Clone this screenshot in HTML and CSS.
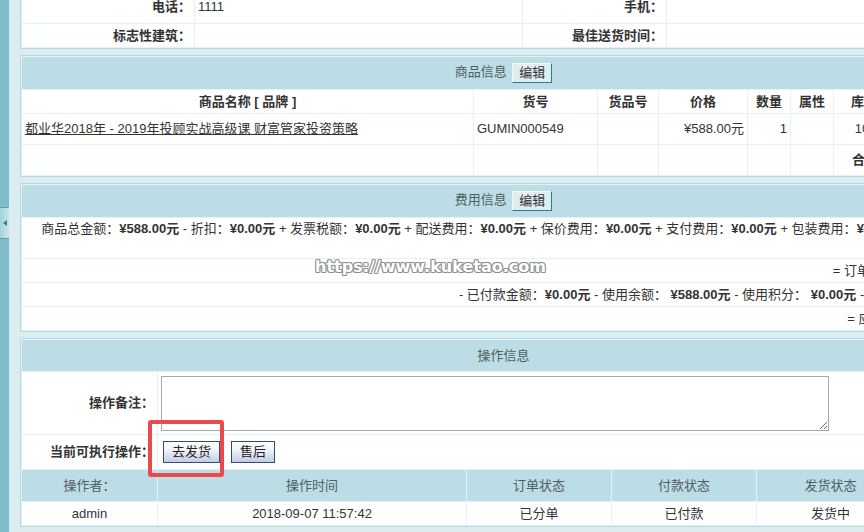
FILE: index.html
```html
<!DOCTYPE html>
<html lang="zh-CN">
<head>
<meta charset="utf-8">
<title>订单信息</title>
<link rel="stylesheet" href="styles.css">
</head>
<body>
<div class="page">
  <aside class="side"><div class="side-tab"><span class="side-arrow"></span></div></aside>
  <main class="main">
    <div class="box">
      <table>
        <colgroup><col class="w172"><col class="w327"><col class="w143"><col></colgroup>
        <tr class="h32"><td class="lbl">电话：</td><td>1111</td><td class="lbl">手机：</td><td></td></tr>
        <tr class="h23"><td class="lbl">标志性建筑：</td><td></td><td class="lbl">最佳送货时间：</td><td></td></tr>
      </table>
    </div>

    <div class="box">
      <table>
        <colgroup><col class="w451"><col class="w123"><col class="w60"><col class="w88"><col class="w42"><col class="w42"><col class="w60"><col></colgroup>
        <tr class="h32"><th colspan="8">商品信息 <button class="btn-edit" type="button">编辑</button></th></tr>
        <tr class="h23 hd"><td>商品名称 [ 品牌 ]</td><td>货号</td><td>货品号</td><td>价格</td><td>数量</td><td>属性</td><td>库存</td><td>小计</td></tr>
        <tr class="h30"><td><a class="goods-link" href="#">都业华2018年 - 2019年投顾实战高级课 财富管家投资策略</a></td><td>GUMIN000549</td><td></td><td class="r">¥588.00元</td><td class="r">1</td><td></td><td class="r">10000</td><td class="r">¥588.00元</td></tr>
        <tr class="h30"><td></td><td></td><td></td><td></td><td></td><td></td><td class="r"><strong>合计：</strong></td><td class="r">¥588.00元</td></tr>
      </table>
    </div>

    <div class="box">
      <table>
        <tr class="h32"><th>费用信息 <button class="btn-edit" type="button">编辑</button></th></tr>
        <tr class="h40"><td class="r">商品总金额：<strong>¥588.00元</strong> - 折扣：<strong>¥0.00元</strong> + 发票税额：<strong>¥0.00元</strong> + 配送费用：<strong>¥0.00元</strong> + 保价费用：<strong>¥0.00元</strong> + 支付费用：<strong>¥0.00元</strong> + 包装费用：<strong>¥0.00元</strong> + 贺卡费用：<strong>¥0.00元</strong></td></tr>
        <tr class="h23"><td class="r">= 订单总金额：<strong>¥588.00元</strong></td></tr>
        <tr class="h23"><td class="r">- 已付款金额：<strong>¥0.00元</strong> - 使用余额： <strong>¥588.00元</strong> - 使用积分： <strong>¥0.00元</strong> - 使用红包： <strong>¥0.00元</strong></td></tr>
        <tr class="h23"><td class="r">= 应付款金额：<strong>¥0.00元</strong></td></tr>
      </table>
    </div>

    <div class="box">
      <table>
        <colgroup><col class="w135"><col class="w308"><col class="w144"><col class="w144"><col class="w147"><col></colgroup>
        <tr class="h31"><th colspan="6">操作信息</th></tr>
        <tr class="h61"><td class="lbl">操作备注：</td><td colspan="5" class="note-cell"><textarea class="note" name="action_note"></textarea></td></tr>
        <tr class="h34"><td class="lbl">当前可执行操作：</td><td colspan="5"><div class="actions"><button class="btn-op" type="button">去发货</button><button class="btn-op" type="button">售后</button></div></td></tr>
        <tr class="h31"><th>操作者：</th><th>操作时间</th><th>订单状态</th><th>付款状态</th><th>发货状态</th><th>备注</th></tr>
        <tr class="h23 c"><td>admin</td><td>2018-09-07 11:57:42</td><td>已分单</td><td>已付款</td><td>发货中</td><td></td></tr>
      </table>
    </div>
  </main>
</div>
<div class="watermark">https://www.kuketao.com</div>
<div class="mark-box"></div>
</body>
</html>
```
FILE: styles.css
```css
html, body {
  margin: 0;
  padding: 0;
  overflow: hidden;
}
body {
  width: 864px;
  height: 532px;
  position: relative;
  background: #dcedf1;
  font: 13px/18px "Liberation Sans", "Noto Sans CJK SC", sans-serif;
  color: #333;
}
.page {
  display: flex;
  height: 532px;
}
.side {
  width: 9px;
  flex: none;
  background: #7fbdcb;
  display: flex;
  flex-direction: column;
}
.side-tab {
  margin-top: 207px;
  height: 30px;
  border-top: 1px solid #5e9fb0;
  border-bottom: 1px solid #5e9fb0;
  background: linear-gradient(to right, #a3d2dd, #c9e5ec);
  display: flex;
  align-items: center;
  justify-content: center;
}
.side-arrow {
  width: 0;
  height: 0;
  border-top: 3px solid transparent;
  border-bottom: 3px solid transparent;
  border-right: 4px solid #3b7b8d;
}
.main {
  flex: none;
  padding-left: 11px;
  margin-top: -11px;
}
.box {
  width: 967px;
  box-sizing: border-box;
  border: 1px solid #b3d9e2;
  background: #e5f2f5;
  margin-bottom: 6px;
}
.box table {
  width: 100%;
  border-collapse: separate;
  border-spacing: 1px;
  table-layout: fixed;
}
td, th {
  padding: 0 3px;
  background: #fff;
  vertical-align: middle;
  white-space: normal;
}
th {
  background: #bddde6;
  font-weight: normal;
  color: #505d61;
  text-align: center;
}
.w172 { width: 172px; }
.w327 { width: 327px; }
.w143 { width: 143px; }
.w451 { width: 451px; }
.w123 { width: 123px; }
.w60 { width: 60px; }
.w88 { width: 88px; }
.w42 { width: 42px; }
.w135 { width: 135px; }
.w308 { width: 308px; }
.w144 { width: 144px; }
.w147 { width: 147px; }

.h23 > td, .h23 > th { height: 23px; }
.h30 > td, .h30 > th { height: 30px; }
.h31 > td, .h31 > th { height: 31px; }
.h32 > td, .h32 > th { height: 32px; }
.h34 > td, .h34 > th { height: 34px; }
.h40 > td, .h40 > th { height: 40px; }
.h61 > td, .h61 > th { height: 61px; }

.lbl {
  text-align: right;
  font-weight: bold;
}
.r { text-align: right; }
.c > td { text-align: center; }
.hd > td {
  text-align: center;
  font-weight: bold;
}
strong { font-weight: bold; }
.goods-link {
  color: #333;
  text-decoration: underline;
}
.btn-edit {
  display: inline-block;
  vertical-align: middle;
  height: 20px;
  margin: 0 0 0 2px;
  padding: 0 6px;
  border: 1px solid;
  border-color: #f2f9fa #2b7b8e #2b7b8e #f2f9fa;
  background: #e0eef1;
  font: 13px/16px "Liberation Sans", "Noto Sans CJK SC", sans-serif;
  color: #333;
}
.note-cell { padding-top: 1px; }
.note {
  display: block;
  width: 668px;
  height: 55px;
  box-sizing: border-box;
  margin: 0;
  border: 1px solid #a9a9a9;
  background: #fff;
  font: 13px/18px "Liberation Sans", "Noto Sans CJK SC", sans-serif;
}
.actions {
  display: flex;
  gap: 11px;
  padding-left: 2px;
}
.btn-op {
  height: 22px;
  padding: 0 8px;
  margin: 0;
  border: 1px solid #2e4c7c;
  background: linear-gradient(to bottom, #ffffff 0%, #f1f3f9 40%, #c4cce3 100%);
  font: 13px/18px "Liberation Sans", "Noto Sans CJK SC", sans-serif;
  color: #222;
}
.watermark {
  position: absolute;
  left: 315px;
  top: 257px;
  font: bold 16px/20px "DejaVu Sans", sans-serif;
  color: #fff;
  text-shadow: 1px 0 #8f8f8f, -1px 0 #8f8f8f, 0 1px #8f8f8f, 0 -1px #8f8f8f,
               1px 1px #a5a5a5, -1px -1px #a5a5a5, 1px -1px #a5a5a5, -1px 1px #a5a5a5;
}
.mark-box {
  position: absolute;
  left: 148px;
  top: 420px;
  width: 76px;
  height: 57px;
  box-sizing: border-box;
  border: 4px solid #e94a4e;
  border-radius: 3px;
}
```
